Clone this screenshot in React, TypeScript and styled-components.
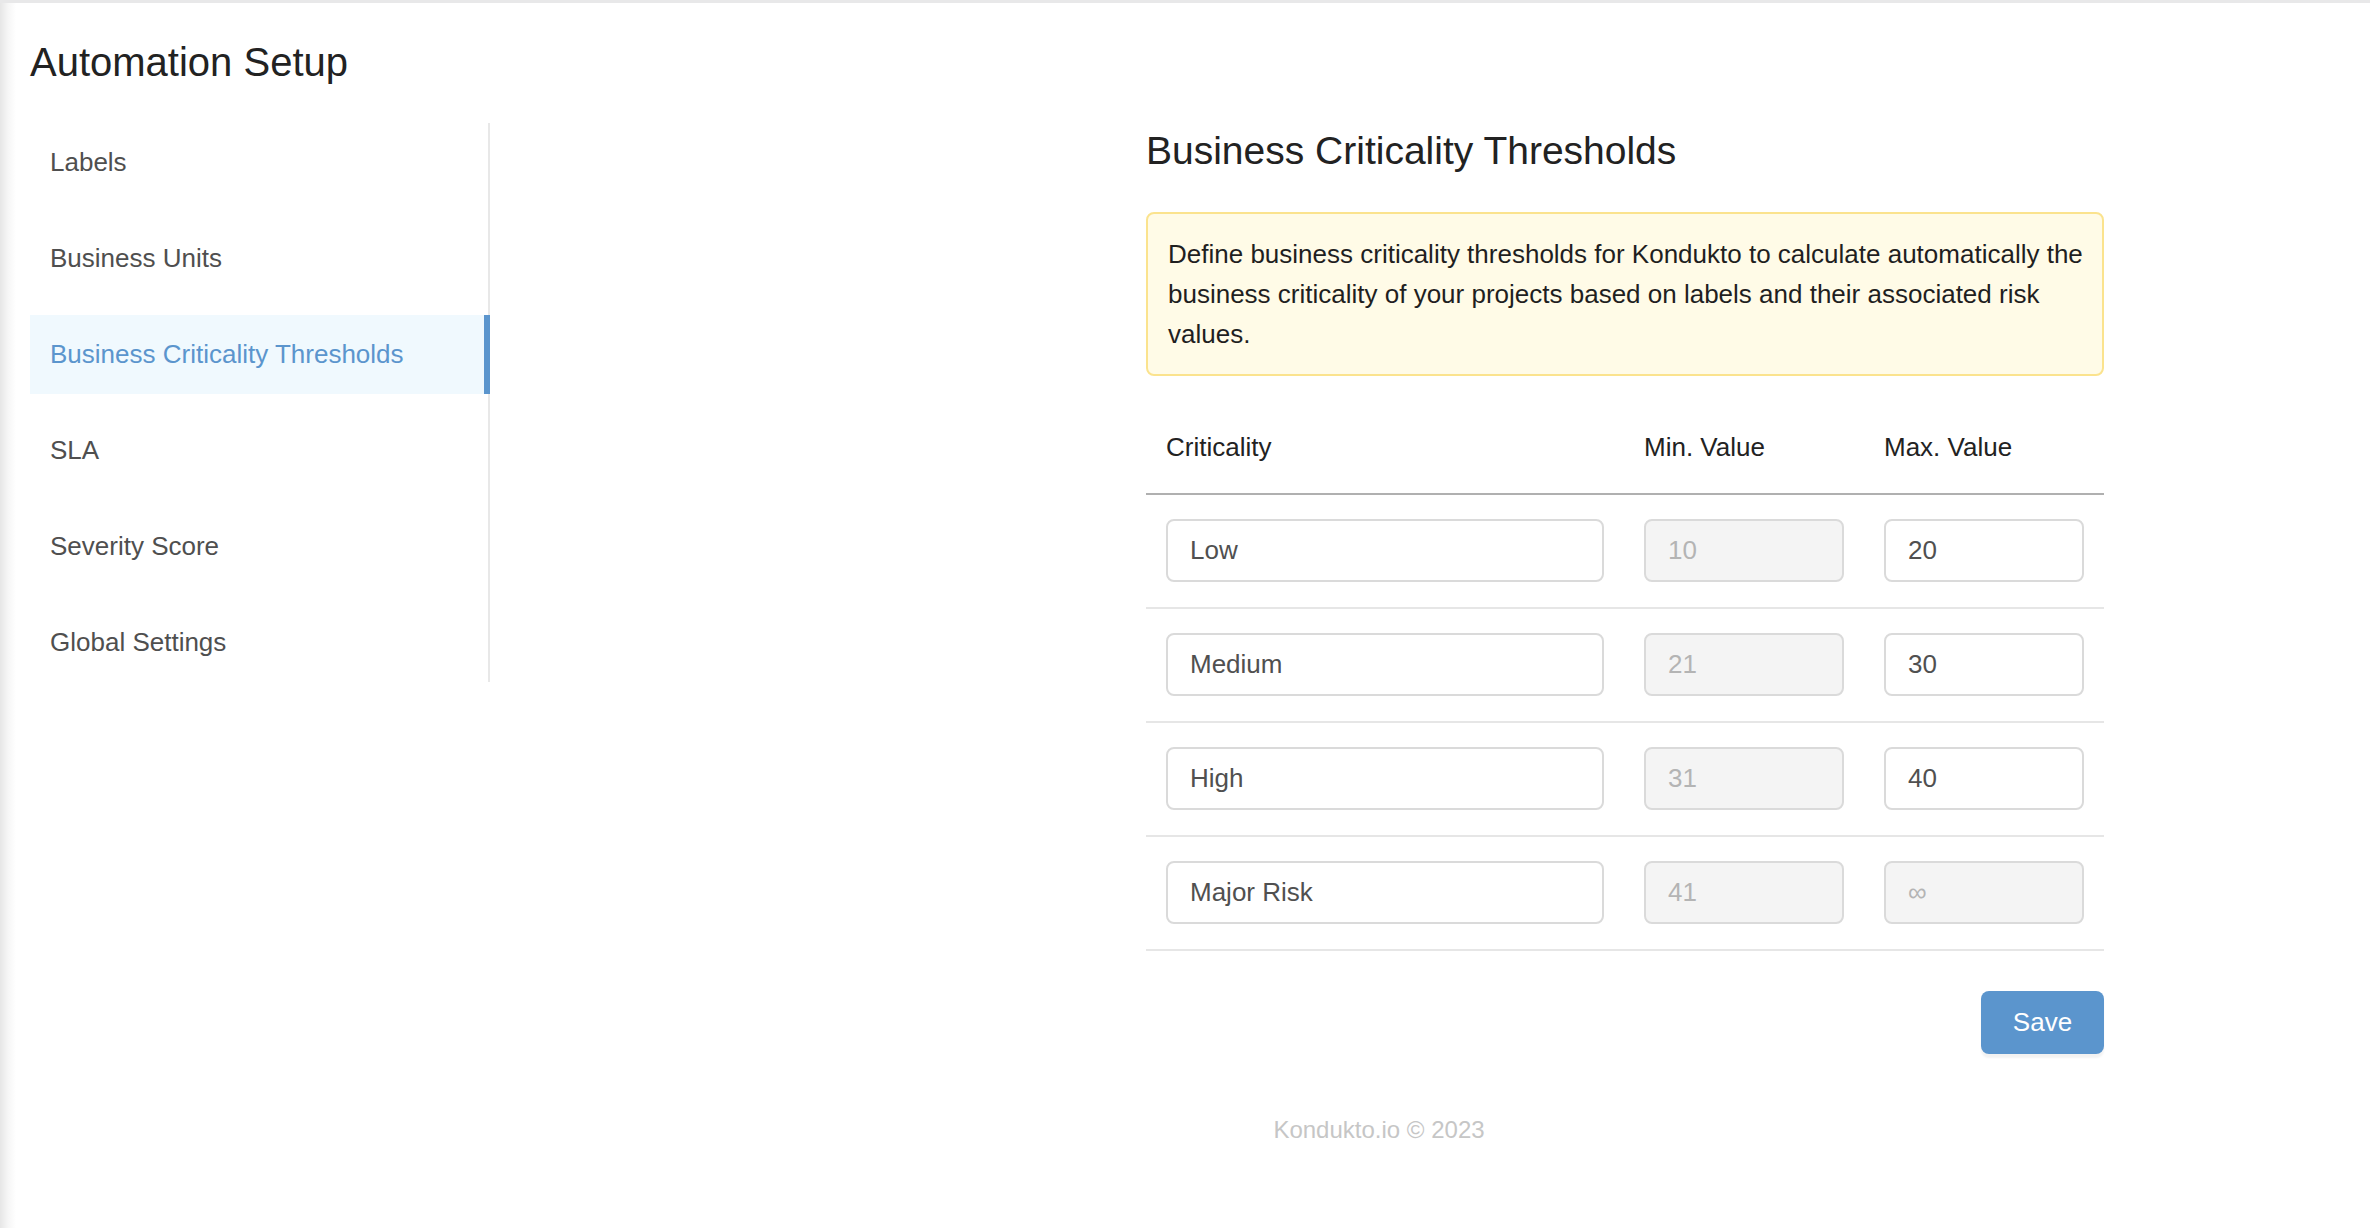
import styled, { createGlobalStyle } from "styled-components";

const GlobalStyle = createGlobalStyle`
  * {
    box-sizing: border-box;
  }
  body {
    margin: 0;
    background: #ffffff;
    font-family: "Liberation Sans", Arial, Helvetica, sans-serif;
    color: #222222;
  }
`;

const Page = styled.div`
  min-height: 100vh;
  border-top: 3px solid #e8e8e9;
  background: linear-gradient(90deg, #e6e6e6 0px, #f6f6f6 8px, #ffffff 16px);
  padding-left: 30px;
`;

const Title = styled.h1`
  margin: 35px 0 0;
  font-size: 40px;
  line-height: 48px;
  font-weight: 400;
  color: #222222;
`;

const Body = styled.div`
  display: flex;
  align-items: flex-start;
  margin-top: 37px;
`;

const Sidebar = styled.nav`
  width: 460px;
  flex-shrink: 0;
  display: flex;
  flex-direction: column;
  gap: 17px;
  border-right: 2px solid #e8e8e8;
`;

const NavItem = styled.a<{ $active?: boolean }>`
  display: flex;
  align-items: center;
  height: 79px;
  padding-left: 20px;
  margin-right: -2px;
  font-size: 26px;
  color: ${(p) => (p.$active ? "#5b95cd" : "#4f4f4f")};
  background: ${(p) => (p.$active ? "#f0f9fe" : "transparent")};
  box-shadow: ${(p) => (p.$active ? "inset -6px 0 0 #5b95cd" : "none")};
  text-decoration: none;
  cursor: pointer;
`;

const Main = styled.main`
  flex: 1;
  display: flex;
  flex-direction: column;
`;

const Content = styled.section`
  width: 958px;
  margin-left: 656px;
  padding-top: 4px;
`;

const Heading = styled.h2`
  margin: 0 0 37px;
  font-size: 39px;
  line-height: 48px;
  font-weight: 400;
  color: #222222;
`;

const Alert = styled.div`
  border: 2px solid #fbe38e;
  border-radius: 8px;
  background: #fffbe7;
  padding: 20px 16px 20px 20px;
  font-size: 26px;
  line-height: 40px;
  color: #1f1f1f;
`;

const Table = styled.table`
  width: 100%;
  margin-top: 25px;
  border-collapse: collapse;
  table-layout: fixed;
`;

const HeadCell = styled.th<{ $width: number }>`
  width: ${(p) => p.$width}px;
  padding: 26px 20px;
  text-align: left;
  font-size: 26px;
  line-height: 40px;
  font-weight: 400;
  color: #222222;
  border-bottom: 2px solid #b0b0b0;
`;

const Row = styled.tr`
  border-bottom: 2px solid #e6e6e6;
`;

const Cell = styled.td`
  padding: 24px 20px 25px;
`;

const Field = styled.input`
  display: block;
  width: 100%;
  height: 63px;
  padding: 0 22px;
  border: 2px solid #dadada;
  border-radius: 8px;
  background: #ffffff;
  font-family: inherit;
  font-size: 26px;
  color: #505050;
  outline: none;

  &:disabled {
    background: #f4f4f4;
    color: #b4b4b4;
    -webkit-text-fill-color: #b4b4b4;
  }
`;

const Actions = styled.div`
  display: flex;
  justify-content: flex-end;
  margin-top: 40px;
`;

const SaveButton = styled.button`
  width: 123px;
  height: 63px;
  border: 0;
  border-radius: 8px;
  background: #5b95cd;
  box-shadow: 0 4px 2px rgba(0, 0, 0, 0.05);
  color: #ffffff;
  font-family: inherit;
  font-size: 26px;
  cursor: pointer;
`;

const Footer = styled.footer`
  margin-top: 60px;
  padding-right: 102px;
  text-align: center;
  font-size: 24px;
  line-height: 32px;
  color: #c6c6c6;
`;

const navItems = [
  "Labels",
  "Business Units",
  "Business Criticality Thresholds",
  "SLA",
  "Severity Score",
  "Global Settings",
];

const thresholds = [
  { name: "Low", min: "10", max: "20", maxLocked: false },
  { name: "Medium", min: "21", max: "30", maxLocked: false },
  { name: "High", min: "31", max: "40", maxLocked: false },
  { name: "Major Risk", min: "41", max: "∞", maxLocked: true },
];

export default function App() {
  return (
    <>
      <GlobalStyle />
      <Page>
        <Title>Automation Setup</Title>
        <Body>
          <Sidebar>
            {navItems.map((item) => (
              <NavItem key={item} $active={item === "Business Criticality Thresholds"}>
                {item}
              </NavItem>
            ))}
          </Sidebar>
          <Main>
            <Content>
              <Heading>Business Criticality Thresholds</Heading>
              <Alert>
                Define business criticality thresholds for Kondukto to calculate automatically the
                business criticality of your projects based on labels and their associated risk
                values.
              </Alert>
              <Table>
                <thead>
                  <tr>
                    <HeadCell $width={478}>Criticality</HeadCell>
                    <HeadCell $width={240}>Min. Value</HeadCell>
                    <HeadCell $width={240}>Max. Value</HeadCell>
                  </tr>
                </thead>
                <tbody>
                  {thresholds.map((t) => (
                    <Row key={t.name}>
                      <Cell>
                        <Field defaultValue={t.name} />
                      </Cell>
                      <Cell>
                        <Field defaultValue={t.min} disabled />
                      </Cell>
                      <Cell>
                        <Field defaultValue={t.max} disabled={t.maxLocked} />
                      </Cell>
                    </Row>
                  ))}
                </tbody>
              </Table>
              <Actions>
                <SaveButton>Save</SaveButton>
              </Actions>
            </Content>
            <Footer>Kondukto.io © 2023</Footer>
          </Main>
        </Body>
      </Page>
    </>
  );
}
